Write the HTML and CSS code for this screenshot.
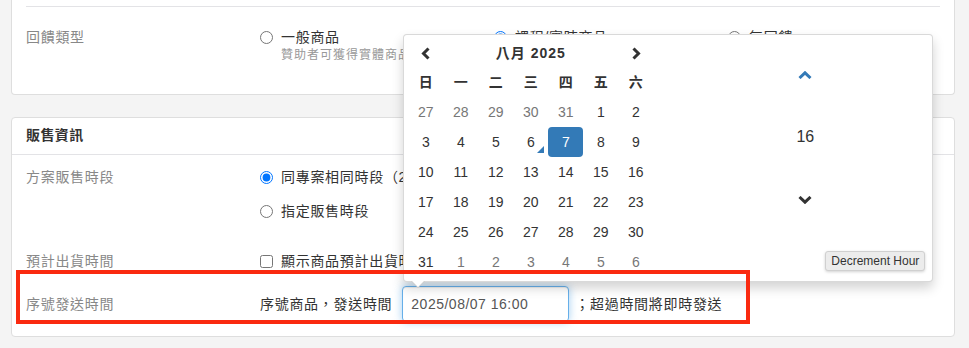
FILE: index.html
```html
<!DOCTYPE html>
<html lang="zh-Hant">
<head>
<meta charset="utf-8">
<title>販售資訊</title>
<link rel="stylesheet" href="styles.css">
</head>
<body>
<div class="page">
  <section class="card card-top">
    <div class="sep"></div>
    <div class="row feedback">
      <div class="label">回饋類型</div>
      <div class="opts">
        <label class="opt"><input type="radio" name="fb"><span class="opt-text"><span>一般商品</span><small class="hint">贊助者可獲得實體商品</small></span></label>
        <label class="opt"><input type="radio" name="fb" checked><span class="opt-text">課程/實時商品</span></label>
        <label class="opt"><input type="radio" name="fb"><span class="opt-text">無回饋</span></label>
      </div>
    </div>
  </section>

  <section class="card card-sale">
    <div class="card-head">販售資訊</div>
    <div class="card-body">
      <div class="row">
        <div class="label">方案販售時段</div>
        <div class="stack">
          <label class="opt wide"><input type="radio" name="period" checked><span class="opt-text">同專案相同時段（2025/07/01 ~ 2025/12/31）</span></label>
          <label class="opt wide"><input type="radio" name="period"><span class="opt-text">指定販售時段</span></label>
        </div>
      </div>
      <div class="row ship">
        <div class="label">預計出貨時間</div>
        <label class="opt wide"><input type="checkbox"><span class="opt-text">顯示商品預計出貨時間</span></label>
      </div>
      <div class="row serial">
        <div class="label">序號發送時間</div>
        <div class="serial-field">
          <span>序號商品，發送時間</span>
          <div class="date-wrap">
            <input class="date-input" type="text" value="2025/08/07 16:00">
            <div class="picker">
              <div class="cal">
                <div class="cal-head">
                  <span class="nav"><svg width="10" height="13" viewBox="0 0 10 13"><path d="M7.5 1.5 L2.5 6.5 L7.5 11.5" fill="none" stroke="#333" stroke-width="3"/></svg></span>
                  <span class="title">八月 2025</span>
                  <span class="nav"><svg width="10" height="13" viewBox="0 0 10 13"><path d="M2.5 1.5 L7.5 6.5 L2.5 11.5" fill="none" stroke="#333" stroke-width="3"/></svg></span>
                </div>
                <div class="grid dow">
                  <span>日</span><span>一</span><span>二</span><span>三</span><span>四</span><span>五</span><span>六</span>
                </div>
                <div class="grid days">
                  <span class="old">27</span><span class="old">28</span><span class="old">29</span><span class="old">30</span><span class="old">31</span><span>1</span><span>2</span>
                  <span>3</span><span>4</span><span>5</span><span class="today">6</span><span class="active">7</span><span>8</span><span>9</span>
                  <span>10</span><span>11</span><span>12</span><span>13</span><span>14</span><span>15</span><span>16</span>
                  <span>17</span><span>18</span><span>19</span><span>20</span><span>21</span><span>22</span><span>23</span>
                  <span>24</span><span>25</span><span>26</span><span>27</span><span>28</span><span>29</span><span>30</span>
                  <span>31</span><span class="old">1</span><span class="old">2</span><span class="old">3</span><span class="old">4</span><span class="old">5</span><span class="old">6</span>
                </div>
              </div>
              <div class="time">
                <div class="t-cell t-up"><svg width="14" height="8" viewBox="0 0 14 8"><path d="M1.5 7 L7 1.8 L12.5 7" fill="none" stroke="#337ab7" stroke-width="3"/></svg></div>
                <div class="t-cell t-hour">16</div>
                <div class="t-cell t-down"><svg width="14" height="8" viewBox="0 0 14 8"><path d="M1.5 1 L7 6.2 L12.5 1" fill="none" stroke="#333" stroke-width="3"/></svg></div>
              </div>
              <div class="tooltip">Decrement Hour</div>
            </div>
          </div>
          <span class="after">；超過時間將即時發送</span>
        </div>
        <div class="highlight"></div>
      </div>
    </div>
  </section>
</div>
</body>
</html>
```

FILE: styles.css
```css
* { box-sizing: border-box; }
html, body { margin: 0; padding: 0; }
body {
  width: 969px;
  height: 348px;
  overflow: hidden;
  background: #f4f4f4;
  font-family: "Liberation Sans", "Noto Sans CJK TC", sans-serif;
  font-size: 14px;
  color: #333;
  letter-spacing: 0.7px;
}
.page { padding: 0 14px 0 11px; }
.card {
  background: #fff;
  border: 1px solid #dedede;
  border-radius: 4px;
}
.card-top {
  border-top: 0;
  border-radius: 0 0 4px 4px;
  padding: 6px 14px 31px;
}
.sep { border-top: 1px solid #e3e3e6; }
.row { display: flex; align-items: flex-start; }
.feedback { padding-top: 20px; }
.label {
  width: 234px;
  flex: none;
  color: #888;
  line-height: 20px;
}
.opts { display: flex; }
.opt {
  width: 234px;
  display: flex;
  align-items: flex-start;
  gap: 8px;
  line-height: 20px;
  white-space: nowrap;
}
.opt.wide { width: auto; }
.opt input {
  margin: 3.5px 0 0;
  width: 13px;
  height: 13px;
  flex: none;
}
.opt-text { display: flex; flex-direction: column; }
.hint {
  font-size: 12px;
  line-height: 16px;
  color: #999;
  letter-spacing: 1px;
}
.card-sale { margin-top: 22px; }
.card-head {
  padding: 7px 14px 9px;
  line-height: 20px;
  font-weight: 600;
  letter-spacing: 0.4px;
  border-bottom: 1px solid #e3e3e6;
}
.card-body { padding: 12px 14px 14px; }
.stack { display: flex; flex-direction: column; gap: 14px; }
.ship { margin-top: 30px; }
.serial {
  margin-top: 15px;
  align-items: center;
  position: relative;
}
.serial .label { line-height: 20px; }
.serial-field { display: flex; align-items: center; line-height: 20px; }
.date-wrap { position: relative; margin: 0 6px 0 10px; }
.date-input {
  display: block;
  width: 167px;
  height: 36px;
  padding: 0 8px;
  border: 1px solid #66afe9;
  border-radius: 4px;
  box-shadow: inset 0 1px 1px rgba(0,0,0,.075), 0 0 8px rgba(102,175,233,.6);
  outline: none;
  font-family: "Liberation Sans", sans-serif;
  font-size: 14px;
  letter-spacing: 0.5px;
  color: #555;
  background: #fff;
}
.picker {
  position: absolute;
  left: 1px;
  bottom: calc(100% + 4px);
  z-index: 5;
  width: 530px;
  padding: 4px;
  display: flex;
  background: #fff;
  border: 1px solid rgba(0,0,0,.15);
  border-radius: 4px;
  box-shadow: 0 6px 12px rgba(0,0,0,.175);
  letter-spacing: 0;
}
.picker::before {
  content: "";
  position: absolute;
  left: 7px;
  bottom: -7px;
  border-left: 7px solid transparent;
  border-right: 7px solid transparent;
  border-top: 7px solid #ccc;
}
.picker::after {
  content: "";
  position: absolute;
  left: 8px;
  bottom: -6px;
  border-left: 6px solid transparent;
  border-right: 6px solid transparent;
  border-top: 6px solid #fff;
}
.cal { width: 245px; flex: none; }
.cal-head {
  display: grid;
  grid-template-columns: 35px 1fr 35px;
  height: 28px;
  align-items: center;
  justify-items: center;
}
.nav { display: flex; }
.title { font-weight: bold; letter-spacing: 1px; }
.grid { display: grid; grid-template-columns: repeat(7, 35px); }
.grid span {
  height: 30px;
  line-height: 30px;
  text-align: center;
  position: relative;
}
.dow span { font-weight: bold; }
.days .old { color: #777; }
.days .active {
  background: #337ab7;
  color: #fff;
  border-radius: 4px;
}
.days .today::before {
  content: "";
  position: absolute;
  right: 4px;
  bottom: 4px;
  border-style: solid;
  border-color: transparent;
  border-width: 0 0 7px 7px;
  border-bottom-color: #337ab7;
}
.time {
  margin-left: 29px;
  flex: 1;
  padding-top: 5px;
  display: flex;
  flex-direction: column;
}
.t-cell {
  display: flex;
  align-items: center;
  justify-content: center;
}
.t-up { height: 62px; }
.t-hour { height: 62px; font-size: 16px; }
.t-down { height: 64px; }
.tooltip {
  position: absolute;
  left: 421px;
  top: 216px;
  width: 100px;
  height: 20px;
  line-height: 18px;
  text-align: center;
  font-size: 12px;
  color: #333;
  background: #ececec;
  border: 1px solid #d0d0d0;
  border-radius: 3px;
  box-shadow: 0 1px 3px rgba(0,0,0,.18);
}
.highlight {
  position: absolute;
  left: -10px;
  top: -16px;
  width: 734px;
  height: 54px;
  border: 4px solid #fa2a10;
  z-index: 10;
  pointer-events: none;
}
```
